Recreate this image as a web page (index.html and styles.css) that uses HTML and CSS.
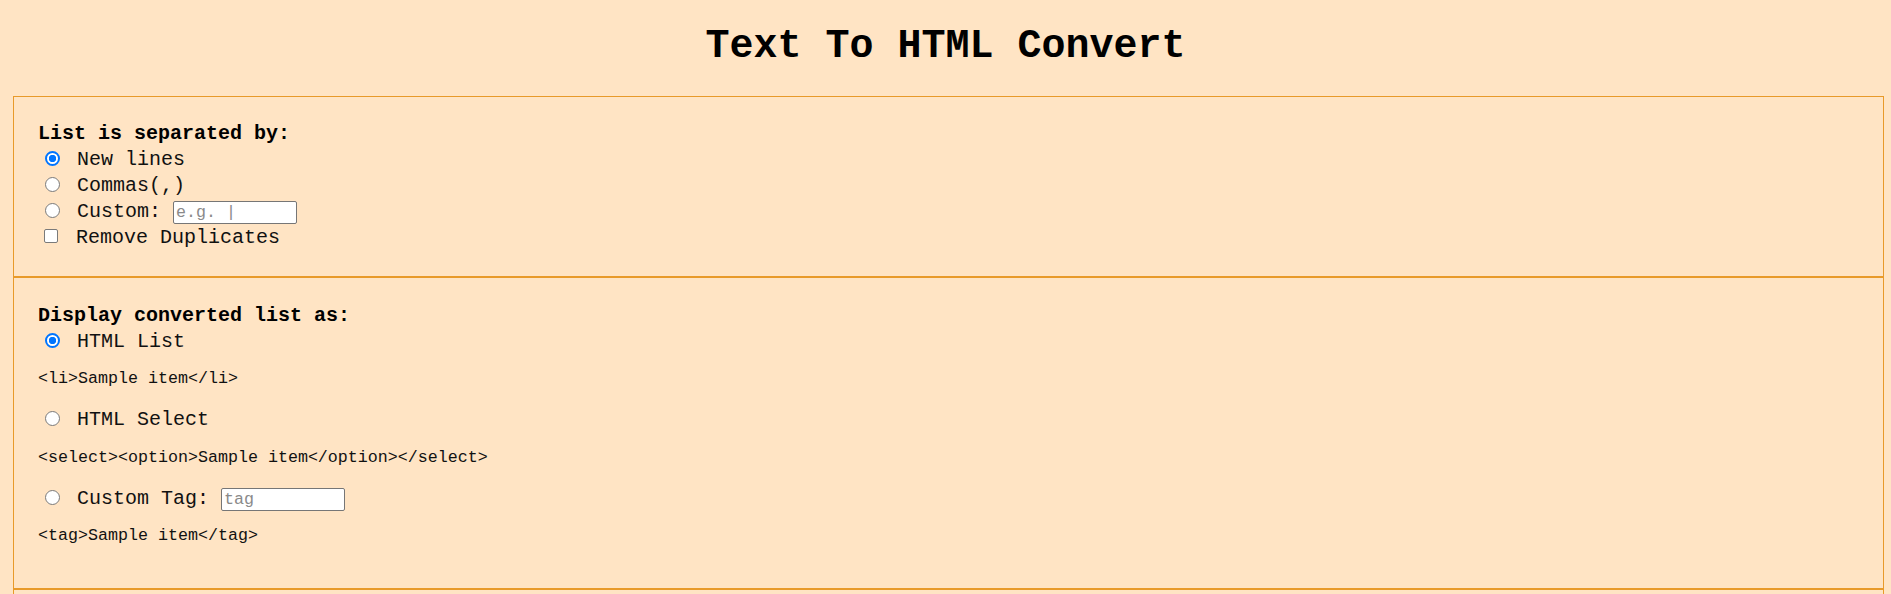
FILE: index.html
```html
<!DOCTYPE html>
<html lang="en">
<head>
<meta charset="utf-8">
<title>Text To HTML Convert</title>
<link rel="stylesheet" href="styles.css">
</head>
<body>
<h1 class="title">Text To HTML Convert</h1>
<div class="panel">
  <section class="group group-first">
    <div class="group-title">List is separated by:</div>
    <div class="opt"><input class="radio" type="radio" name="sep" id="sep-nl" checked> <label for="sep-nl">New lines</label></div>
    <div class="opt"><input class="radio" type="radio" name="sep" id="sep-comma"> <label for="sep-comma">Commas(,)</label></div>
    <div class="opt"><input class="radio" type="radio" name="sep" id="sep-custom"> <label for="sep-custom">Custom:</label> <input class="field" type="text" placeholder="e.g. |"></div>
    <div class="opt"><input class="check" type="checkbox" id="dupes"> <label for="dupes">Remove Duplicates</label></div>
  </section>
  <section class="group group-wide">
    <div class="group-title">Display converted list as:</div>
    <div class="opt"><input class="radio" type="radio" name="out" id="out-list" checked> <label for="out-list">HTML List</label></div>
    <p class="sample">&lt;li&gt;Sample item&lt;/li&gt;</p>
    <div class="opt"><input class="radio" type="radio" name="out" id="out-select"> <label for="out-select">HTML Select</label></div>
    <p class="sample">&lt;select&gt;&lt;option&gt;Sample item&lt;/option&gt;&lt;/select&gt;</p>
    <div class="opt"><input class="radio" type="radio" name="out" id="out-tag"> <label for="out-tag">Custom Tag:</label> <input class="field" type="text" placeholder="tag"></div>
    <p class="sample">&lt;tag&gt;Sample item&lt;/tag&gt;</p>
  </section>
  <section class="group group-last">
    <textarea class="input-area" rows="8" aria-label="Your list"></textarea>
  </section>
</div>
</body>
</html>
```

FILE: styles.css
```css
html, body {
  margin: 0;
  padding: 0;
  background: #ffe4c4;
}

body {
  font-family: "Courier New", "Liberation Mono", monospace;
  font-size: 20px;
  color: #111;
}

.title {
  margin: 24px 0 27px;
  font-size: 40px;
  font-weight: bold;
  text-align: center;
  color: #000;
}

.panel {
  margin: 0 7px 0 13px;
  border: 1px solid #e89a2a;
  border-bottom: none;
}

.group {
  padding: 24px;
  border-bottom: 2px solid #e89a2a;
}

.group-first {
  padding-bottom: 25px;
}

.group-wide {
  padding-top: 25px;
  padding-bottom: 24px;
}

.group-last {
  padding-top: 30px;
}

.group-title {
  font-weight: bold;
  line-height: 26px;
  color: #000;
}

.opt {
  line-height: 26px;
}

.radio {
  -webkit-appearance: none;
  appearance: none;
  box-sizing: border-box;
  width: 15px;
  height: 15px;
  margin: 3px 5px -1px 7px;
  border: 1.5px solid #7a7a7a;
  border-radius: 50%;
  background: #fff;
  vertical-align: baseline;
}

.radio:checked {
  border: 2px solid #0075ff;
  background: radial-gradient(circle, #0075ff 0 3.4px, #fff 4px);
}

.check {
  -webkit-appearance: none;
  appearance: none;
  box-sizing: border-box;
  width: 14px;
  height: 14px;
  margin: 3px 6px 0 6px;
  border: 1.5px solid #7a7a7a;
  border-radius: 2px;
  background: #fff;
  vertical-align: baseline;
}

.field {
  box-sizing: border-box;
  width: 124px;
  height: 23px;
  padding: 1px 2px;
  border: 1px solid #767676;
  border-radius: 2px;
  background: #fff;
  font-family: inherit;
  font-size: 16.67px;
}

.field::placeholder {
  color: #8a8a8a;
}

.sample {
  margin: 14.3px 0 19px;
  font-size: smaller;
  line-height: normal;
}

.input-area {
  display: block;
  width: 100%;
  box-sizing: border-box;
}
```
